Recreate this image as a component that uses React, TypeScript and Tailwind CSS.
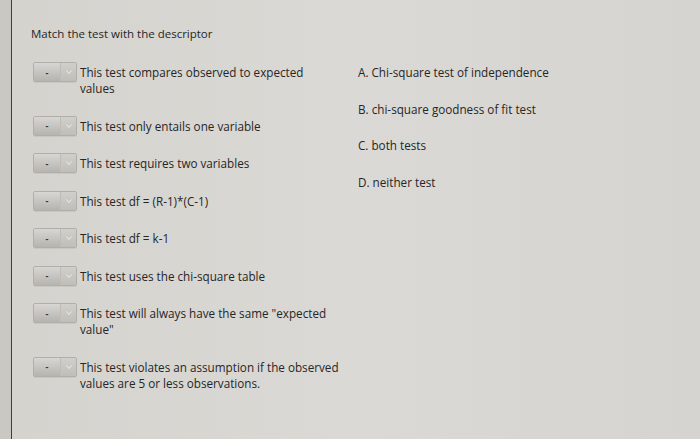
import React from 'react';

const descriptors = [
  'This test compares observed to expected values',
  'This test only entails one variable',
  'This test requires two variables',
  'This test df = (R-1)*(C-1)',
  'This test df = k-1',
  'This test uses the chi-square table',
  'This test will always have the same "expected value"',
  'This test violates an assumption if the observed values are 5 or less observations.',
];

const answers = [
  'A. Chi-square test of independence',
  'B. chi-square goodness of fit test',
  'C. both tests',
  'D. neither test',
];

function MatchSelect() {
  return (
    <div className="flex h-[20px] w-[44px] shrink-0 -my-[2px] overflow-hidden rounded-[2px] border border-[#b0afaa] shadow-[0_1px_0_rgba(0,0,0,0.06)]">
      <div className="flex flex-1 items-center justify-center bg-gradient-to-b from-[#d7d6d2] to-[#b5b4af] text-[9px] font-bold leading-none text-[#333]">
        -
      </div>
      <div className="flex w-[16px] items-center justify-center border-l border-[#bdbcb7] bg-gradient-to-b from-[#d0cfcb] to-[#bfbeb9]">
        <svg width="6" height="4" viewBox="0 0 6 4">
          <path d="M0.5 0.5 L3 3.5 L5.5 0.5" fill="none" stroke="#eeeeea" strokeWidth="1" />
        </svg>
      </div>
    </div>
  );
}

export default function App() {
  return (
    <div
      className="h-[439px] w-[700px] overflow-hidden bg-gradient-to-r from-[#cac8c3] to-[#d0cec9] pl-[11px] text-[#262626]"
      style={{ fontFamily: '"Open Sans", "Liberation Sans", sans-serif' }}
    >
      <div className="h-full border-l border-[#3d3d3b] bg-gradient-to-r from-[#d5d3ce] via-[#dbd9d5] to-[#d6d4d0] pl-[19px] pt-[26px]">
        <h1 className="text-[11.5px] leading-[16px] font-normal">Match the test with the descriptor</h1>

        <div className="mt-[22px] flex">
          <div className="flex w-[309px] flex-col gap-[21.5px] pl-[2px]">
            {descriptors.map((text) => (
              <div key={text} className="flex items-start gap-[3px]">
                <MatchSelect />
                <p className="w-[262px] text-[11.7px] leading-[16px]">{text}</p>
              </div>
            ))}
          </div>

          <ul className="ml-[18px] flex flex-col gap-[20.7px]">
            {answers.map((a) => (
              <li key={a} className="text-[11.7px] leading-[16px]">
                {a}
              </li>
            ))}
          </ul>
        </div>
      </div>
    </div>
  );
}
